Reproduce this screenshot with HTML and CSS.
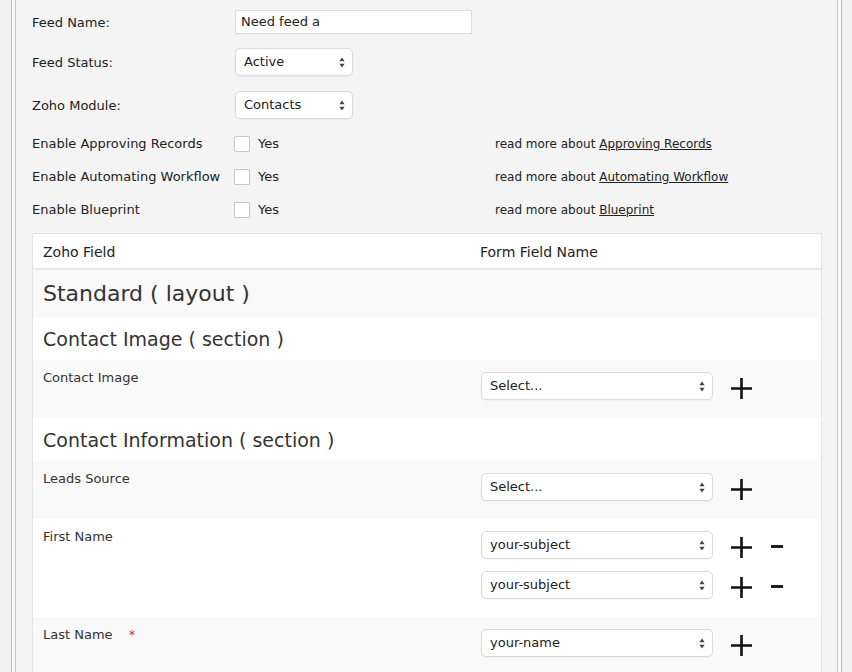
FILE: index.html
```html
<!DOCTYPE html>
<html>
<head>
<meta charset="utf-8">
<link rel="stylesheet" href="styles.css">
</head>
<body>
<div class="outer">
  <div class="inner">
    <div class="form">
      <div class="frow r1">
        <label class="lbl">Feed Name:</label>
        <div class="ctl"><div class="textinput">Need feed a</div></div>
      </div>
      <div class="frow r2">
        <label class="lbl">Feed Status:</label>
        <div class="ctl"><div class="sel small"><span>Active</span><svg class="arr" width="6" height="11" viewBox="0 0 6 11"><path d="M3 0.5L5.6 4.2H0.4Z" fill="#444"/><path d="M3 10.5L5.6 6.8H0.4Z" fill="#444"/></svg></div></div>
      </div>
      <div class="frow r3">
        <label class="lbl">Zoho Module:</label>
        <div class="ctl"><div class="sel small"><span>Contacts</span><svg class="arr" width="6" height="11" viewBox="0 0 6 11"><path d="M3 0.5L5.6 4.2H0.4Z" fill="#444"/><path d="M3 10.5L5.6 6.8H0.4Z" fill="#444"/></svg></div></div>
      </div>
      <div class="crow">
        <label class="lbl">Enable Approving Records</label>
        <div class="chk"><span class="box"></span><span>Yes</span></div>
        <div class="more">read more about <a href="#">Approving Records</a></div>
      </div>
      <div class="crow">
        <label class="lbl">Enable Automating Workflow</label>
        <div class="chk"><span class="box"></span><span>Yes</span></div>
        <div class="more">read more about <a href="#">Automating Workflow</a></div>
      </div>
      <div class="crow">
        <label class="lbl">Enable Blueprint</label>
        <div class="chk"><span class="box"></span><span>Yes</span></div>
        <div class="more">read more about <a href="#">Blueprint</a></div>
      </div>
    </div>

    <div class="table">
      <div class="thead">
        <div class="c1">Zoho Field</div>
        <div class="c2">Form Field Name</div>
      </div>
      <div class="layout-row alt">Standard ( layout )</div>
      <div class="section-row">Contact Image ( section )</div>
      <div class="field alt">
        <div class="c1 flabel">Contact Image</div>
        <div class="c2 fctl">
          <div class="line">
            <div class="sel wide"><span>Select...</span><svg class="arr" width="6" height="11" viewBox="0 0 6 11"><path d="M3 0.5L5.6 4.2H0.4Z" fill="#444"/><path d="M3 10.5L5.6 6.8H0.4Z" fill="#444"/></svg></div>
            <svg class="plus" width="21" height="21" viewBox="0 0 21 21"><path d="M10.5 0V21M0 10.5H21" stroke="#111" stroke-width="2.6"/></svg>
          </div>
        </div>
      </div>
      <div class="section-row">Contact Information ( section )</div>
      <div class="field alt">
        <div class="c1 flabel">Leads Source</div>
        <div class="c2 fctl">
          <div class="line">
            <div class="sel wide"><span>Select...</span><svg class="arr" width="6" height="11" viewBox="0 0 6 11"><path d="M3 0.5L5.6 4.2H0.4Z" fill="#444"/><path d="M3 10.5L5.6 6.8H0.4Z" fill="#444"/></svg></div>
            <svg class="plus" width="21" height="21" viewBox="0 0 21 21"><path d="M10.5 0V21M0 10.5H21" stroke="#111" stroke-width="2.6"/></svg>
          </div>
        </div>
      </div>
      <div class="field">
        <div class="c1 flabel">First Name</div>
        <div class="c2 fctl">
          <div class="line">
            <div class="sel wide"><span>your-subject</span><svg class="arr" width="6" height="11" viewBox="0 0 6 11"><path d="M3 0.5L5.6 4.2H0.4Z" fill="#444"/><path d="M3 10.5L5.6 6.8H0.4Z" fill="#444"/></svg></div>
            <svg class="plus" width="21" height="21" viewBox="0 0 21 21"><path d="M10.5 0V21M0 10.5H21" stroke="#111" stroke-width="2.6"/></svg>
            <svg class="minus" width="12" height="21" viewBox="0 0 12 21"><path d="M0 10.5H12" stroke="#111" stroke-width="2.8"/></svg>
          </div>
          <div class="line">
            <div class="sel wide"><span>your-subject</span><svg class="arr" width="6" height="11" viewBox="0 0 6 11"><path d="M3 0.5L5.6 4.2H0.4Z" fill="#444"/><path d="M3 10.5L5.6 6.8H0.4Z" fill="#444"/></svg></div>
            <svg class="plus" width="21" height="21" viewBox="0 0 21 21"><path d="M10.5 0V21M0 10.5H21" stroke="#111" stroke-width="2.6"/></svg>
            <svg class="minus" width="12" height="21" viewBox="0 0 12 21"><path d="M0 10.5H12" stroke="#111" stroke-width="2.8"/></svg>
          </div>
        </div>
      </div>
      <div class="field alt">
        <div class="c1 flabel">Last Name <span class="req">*</span></div>
        <div class="c2 fctl">
          <div class="line">
            <div class="sel wide"><span>your-name</span><svg class="arr" width="6" height="11" viewBox="0 0 6 11"><path d="M3 0.5L5.6 4.2H0.4Z" fill="#444"/><path d="M3 10.5L5.6 6.8H0.4Z" fill="#444"/></svg></div>
            <svg class="plus" width="21" height="21" viewBox="0 0 21 21"><path d="M10.5 0V21M0 10.5H21" stroke="#111" stroke-width="2.6"/></svg>
          </div>
        </div>
      </div>
    </div>
  </div>
</div>
</body>
</html>
```

FILE: styles.css
```css
html, body {
  margin: 0;
  padding: 0;
}
body {
  background: #f1f1f1;
  font-family: "DejaVu Sans", Verdana, sans-serif;
  font-size: 13px;
  color: #222;
  height: 672px;
  overflow: hidden;
}
.outer {
  margin-left: 11px;
  width: 823px;
  padding: 0 3px;
  border-left: 1px solid #bdbdbd;
  border-right: 1px solid #bdbdbd;
  background: #f8f8f8;
  min-height: 700px;
}
.inner {
  border-left: 1px solid #c4c4c4;
  border-right: 1px solid #c4c4c4;
  background: #f4f4f4;
  padding: 10px 15px 0 16px;
  min-height: 700px;
}
.form {
  display: flex;
  flex-direction: column;
}
.frow {
  display: grid;
  grid-template-columns: 202px 1fr;
  align-items: center;
}
.r1 { height: 24px; margin-bottom: 14px; }
.r2 { height: 28px; margin-bottom: 15px; }
.r3 { height: 28px; margin-bottom: 8px; }
.frow .lbl { padding-top: 1px; }
.lbl {
  font-size: 13px;
  color: #222;
}
.ctl {
  padding-left: 1px;
}
.textinput {
  width: 225px;
  height: 22px;
  line-height: 22px;
  padding: 0 5px;
  background: #fff;
  border: 1px solid #dcdcdc;
  font-size: 13px;
  color: #222;
}
.sel {
  display: flex;
  align-items: center;
  justify-content: space-between;
  height: 26px;
  background: #fff;
  border: 1px solid #dadada;
  border-radius: 5px;
  box-shadow: 0 1px 1px rgba(0,0,0,0.04);
  padding: 0 7px 0 8px;
  font-size: 13px;
  color: #222;
  box-sizing: content-box;
}
.sel span { margin-top: -1px; }
.sel.small { width: 101px; }
.sel.wide { width: 215px; }
.sel .arr { flex: none; margin-top: 1px; }
.crow {
  display: grid;
  grid-template-columns: 202px 261px 1fr;
  align-items: center;
  height: 33px;
}
.chk {
  display: flex;
  align-items: center;
  gap: 8px;
  font-size: 13px;
}
.box {
  width: 14px;
  height: 14px;
  border: 1px solid #c6c6c6;
  background: #fff;
  border-radius: 1px;
}
.more {
  font-size: 12px;
  color: #222;
}
.more a {
  color: #222;
  text-decoration: underline;
}
.table {
  margin-top: 7px;
  width: 788px;
  border: 1px solid #e3e3e3;
  border-bottom: none;
  background: #fff;
}
.thead {
  display: flex;
  height: 34px;
  align-items: center;
  border-bottom: 2px solid #e8e8e8;
  font-size: 14px;
  color: #222;
}
.thead div { padding-top: 1px; }
.c1 {
  width: 437px;
  padding-left: 10px;
  box-sizing: border-box;
}
.c2 {
  flex: 1;
  padding-left: 10px;
}
.alt { background: #f9f9f9; }
.layout-row {
  height: 47px;
  display: flex;
  align-items: center;
  padding-left: 10px;
  font-size: 22px;
  color: #333;
}
.section-row {
  height: 43px;
  display: flex;
  align-items: center;
  padding-left: 10px;
  font-size: 19px;
  color: #333;
}
.field {
  display: flex;
  padding: 12px 0 18px;
}
.flabel {
  font-size: 13px;
  color: #333;
  line-height: 16px;
  margin-top: -2px;
}
.req {
  color: #dd3d16;
  margin-left: 12px;
  font-size: 13px;
}
.fctl {
  display: flex;
  flex-direction: column;
  gap: 12px;
  padding-left: 11px;
}
.line {
  display: flex;
  align-items: center;
}
.plus {
  margin-left: 18px;
  margin-top: 4px;
}
.minus {
  margin-left: 19px;
  margin-top: 2px;
}
```
